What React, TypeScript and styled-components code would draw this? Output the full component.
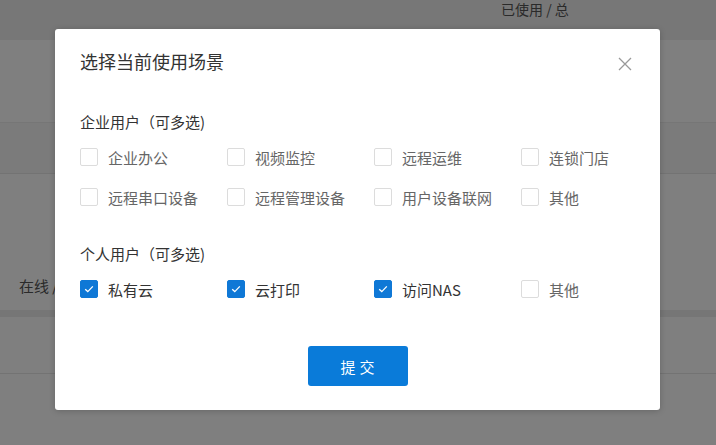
import React, { useState } from "react";
import styled, { createGlobalStyle } from "styled-components";

const Global = createGlobalStyle`
  html, body { margin: 0; padding: 0; background: #fff; }
  body { font-family: "Noto Sans CJK SC", "Noto Sans", sans-serif; }
  * { box-sizing: border-box; }
`;

const Page = styled.div`
  width: 716px;
  height: 445px;
  overflow: hidden;
  position: relative;
  background: #fff;
  color: #555;
`;

const Header = styled.div`
  height: 40px;
  background: #eeeeee;
  padding: 1px 0 0 501px;
  font-size: 14px;
  line-height: 17px;
  color: #555;
`;

const Spacer = styled.div<{ $h: number }>`
  height: ${(p) => p.$h}px;
`;

const TableHead = styled.div`
  height: 52px;
  background: #f6f6f6;
  border-top: 1px solid #ececec;
  border-bottom: 1px solid #e6e6e6;
`;

const TableRow = styled.div`
  height: 136px;
  display: flex;
  align-items: flex-end;
  padding: 0 0 14px 19px;
  font-size: 15px;
  color: #555;
`;

const Divider = styled.div`
  height: 7px;
  background: #ececec;
`;

const TableRowB = styled.div`
  height: 57px;
  border-bottom: 1px solid #e6e6e6;
`;

const Overlay = styled.div`
  position: absolute;
  inset: 0;
  background: rgba(0, 0, 0, 0.5);
  display: flex;
  justify-content: flex-start;
  align-items: flex-start;
  padding: 29px 0 0 55px;
`;

const Modal = styled.div`
  position: relative;
  width: 605px;
  height: 381px;
  background: #fff;
  border-radius: 3px;
  box-shadow: 0 1px 6px rgba(0, 0, 0, 0.2);
  padding: 20px 25px 24px;
  display: flex;
  flex-direction: column;
`;

const Title = styled.div`
  font-size: 18px;
  line-height: 24px;
  color: #333;
`;

const Close = styled.button`
  position: absolute;
  top: 27px;
  right: 27px;
  width: 16px;
  height: 16px;
  padding: 0;
  border: none;
  background: none;
  cursor: pointer;
  display: flex;
  align-items: center;
  justify-content: center;
`;

const SectionLabel = styled.div<{ $mt: number }>`
  margin-top: ${(p) => p.$mt}px;
  font-size: 15px;
  line-height: 20px;
  color: #333;
`;

const Grid = styled.div`
  margin-top: 5px;
  display: grid;
  grid-template-columns: repeat(4, 147px);
  grid-auto-rows: 40px;
`;

const Option = styled.label<{ $checked: boolean }>`
  display: flex;
  align-items: center;
  gap: 10px;
  font-size: 15px;
  color: ${(p) => (p.$checked ? "#333" : "#666")};
  cursor: pointer;
`;

const Box = styled.span<{ $checked: boolean }>`
  width: 18px;
  height: 18px;
  border-radius: 2px;
  flex: none;
  border: 1px solid ${(p) => (p.$checked ? "#0f78d6" : "#dcdcdc")};
  background: ${(p) => (p.$checked ? "#0f78d6" : "#fff")};
  display: flex;
  align-items: center;
  justify-content: center;
`;

const Footer = styled.div`
  margin-top: 37px;
  display: flex;
  justify-content: center;
`;

const Submit = styled.button`
  width: 100px;
  height: 40px;
  border: none;
  border-radius: 3px;
  background: #0a7bd9;
  color: #fff;
  font-family: inherit;
  font-size: 15px;
  letter-spacing: 4px;
  text-indent: 4px;
  cursor: pointer;
`;

const Check = () => (
  <svg width="10" height="8" viewBox="0 0 10 8">
    <path d="M1.2 4.2 L3.8 6.6 L8.8 1.4" fill="none" stroke="#fff" strokeWidth="1.3" />
  </svg>
);

const CloseIcon = () => (
  <svg width="14" height="14" viewBox="0 0 14 14">
    <path d="M1 1 L13 13 M13 1 L1 13" stroke="#999" strokeWidth="1.3" />
  </svg>
);

const enterprise = ["企业办公", "视频监控", "远程运维", "连锁门店", "远程串口设备", "远程管理设备", "用户设备联网", "其他"];
const personal = ["私有云", "云打印", "访问NAS", "其他"];

function Group({ items, initial }: { items: string[]; initial: boolean[] }) {
  const [state, setState] = useState(initial);
  return (
    <Grid>
      {items.map((t, i) => (
        <Option
          key={i}
          $checked={state[i]}
          onClick={() => setState((s) => s.map((v, j) => (j === i ? !v : v)))}
        >
          <Box $checked={state[i]}>{state[i] && <Check />}</Box>
          {t}
        </Option>
      ))}
    </Grid>
  );
}

export default function App() {
  return (
    <>
      <Global />
      <Page>
        <Header>已使用 / 总</Header>
        <Spacer $h={82} />
        <TableHead />
        <TableRow>在线 / </TableRow>
        <Divider />
        <TableRowB />
        <Overlay>
          <Modal>
            <Title>选择当前使用场景</Title>
            <Close aria-label="close">
              <CloseIcon />
            </Close>
            <SectionLabel $mt={39}>企业用户（可多选)</SectionLabel>
            <Group items={enterprise} initial={enterprise.map(() => false)} />
            <SectionLabel $mt={27}>个人用户（可多选)</SectionLabel>
            <Group items={personal} initial={[true, true, true, false]} />
            <Footer>
              <Submit>提交</Submit>
            </Footer>
          </Modal>
        </Overlay>
      </Page>
    </>
  );
}
